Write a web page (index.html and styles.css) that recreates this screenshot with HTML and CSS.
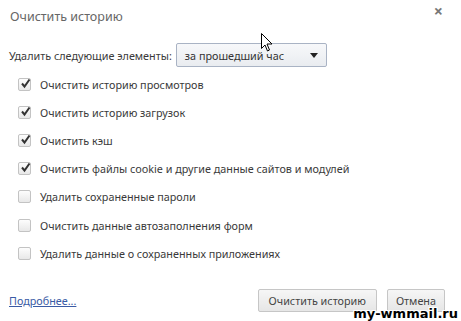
FILE: index.html
```html
<!DOCTYPE html>
<html>
<head>
<meta charset="utf-8">
<link rel="stylesheet" href="styles.css">
</head>
<body>
<div class="dialog">
  <div class="header">
    <div class="title">Очистить историю</div>
    <div class="close">×</div>
  </div>
  <div class="range">
    <span class="range-label">Удалить следующие элементы:</span>
    <div class="select">
      <span>за прошедший час</span>
      <svg class="arrow" width="8" height="5" viewBox="0 0 8 5"><path d="M0 0H8L4 5Z" fill="#222"/></svg>
    </div>
  </div>
  <ul class="items">
    <li><span class="cb checked"><svg viewBox="0 0 11 11" width="11" height="11"><path d="M2 5.5L4.5 8.5L9.5 1.5" fill="none" stroke="#333" stroke-width="2"/></svg></span>Очистить историю просмотров</li>
    <li><span class="cb checked"><svg viewBox="0 0 11 11" width="11" height="11"><path d="M2 5.5L4.5 8.5L9.5 1.5" fill="none" stroke="#333" stroke-width="2"/></svg></span>Очистить историю загрузок</li>
    <li><span class="cb checked"><svg viewBox="0 0 11 11" width="11" height="11"><path d="M2 5.5L4.5 8.5L9.5 1.5" fill="none" stroke="#333" stroke-width="2"/></svg></span>Очистить кэш</li>
    <li><span class="cb checked"><svg viewBox="0 0 11 11" width="11" height="11"><path d="M2 5.5L4.5 8.5L9.5 1.5" fill="none" stroke="#333" stroke-width="2"/></svg></span>Очистить файлы cookie и другие данные сайтов и модулей</li>
    <li><span class="cb"></span>Удалить сохраненные пароли</li>
    <li><span class="cb"></span>Очистить данные автозаполнения форм</li>
    <li><span class="cb"></span>Удалить данные о сохраненных приложениях</li>
  </ul>
  <div class="footer">
    <a class="more" href="#">Подробнее...</a>
    <div class="buttons">
      <button class="btn btn-main">Очистить историю</button>
      <button class="btn">Отмена</button>
    </div>
  </div>
</div>
<svg class="cursor" width="12" height="19" viewBox="0 0 12 19"><path d="M0.5 0.5V15.5L4 12L6.5 18L8.5 17L6 11H11Z" fill="#fff" stroke="#000" stroke-width="1"/></svg>
<div class="watermark">my-wmmail.ru</div>
</body>
</html>
```
FILE: styles.css
```css
html, body {
  margin: 0;
  padding: 0;
  background: #fff;
  width: 461px;
  height: 321px;
  overflow: hidden;
  position: relative;
  font-family: "Noto Sans", "Open Sans", sans-serif;
  color: #3a3a3a;
}
.dialog {
  padding: 0 0 0 9px;
  box-sizing: border-box;
  height: 321px;
  display: flex;
  flex-direction: column;
}
.header {
  display: flex;
  justify-content: space-between;
  align-items: flex-start;
  height: 43px;
}
.title {
  font-size: 12.5px;
  color: #666;
  margin-top: 8px;
  margin-left: 1px;
}
.close {
  font-size: 16px;
  color: #777;
  margin-top: 0;
  margin-right: 18px;
  font-weight: bold;
}
.range {
  display: flex;
  align-items: center;
  gap: 4px;
  font-size: 10.8px;
}
.select {
  width: 151px;
  height: 24px;
  box-sizing: border-box;
  border: 1px solid #a9b3c4;
  border-radius: 2px;
  background: linear-gradient(#f7f8fa, #e9ecf0);
  display: flex;
  align-items: center;
  justify-content: space-between;
  padding: 0 8px 0 8px;
  color: #333;
}
.items {
  list-style: none;
  margin: 3px 0 0 0;
  padding: 0 0 0 9px;
  font-size: 10.8px;
}
.items li {
  display: flex;
  align-items: center;
  height: 28.2px;
}
.cb {
  width: 11px;
  height: 11px;
  border: 1px solid #c3c3c3;
  border-radius: 2px;
  background: linear-gradient(#fdfdfd, #e8e8e8);
  margin-right: 9px;
  position: relative;
  flex: none;
}
.cb svg {
  position: absolute;
  left: 1px;
  top: -1px;
}
.footer {
  margin-top: auto;
  margin-bottom: 9px;
  display: flex;
  justify-content: space-between;
  align-items: center;
}
.more {
  color: #3a5ba5;
  font-size: 10.8px;
  text-decoration: underline;
}
.buttons {
  display: flex;
  gap: 10px;
  margin-right: 16px;
}
.btn {
  font-family: inherit;
  font-size: 10.8px;
  color: #444;
  height: 23px;
  padding: 0 8px;
  border: 1px solid #c6c6c6;
  border-radius: 2px;
  background: linear-gradient(#f6f6f6, #e6e6e6);
}
.btn-main {
  padding: 0 10px;
}
.cursor {
  position: absolute;
  left: 261px;
  top: 33px;
}
.watermark {
  position: absolute;
  right: 3px;
  bottom: 0px;
  font-family: "DejaVu Sans", sans-serif;
  font-weight: bold;
  font-size: 13px;
  color: #000;
  text-shadow: 1px 0 #fff, -1px 0 #fff, 0 1px #fff, 0 -1px #fff, 1px 1px #fff, -1px -1px #fff, 1px -1px #fff, -1px 1px #fff;
}
```
